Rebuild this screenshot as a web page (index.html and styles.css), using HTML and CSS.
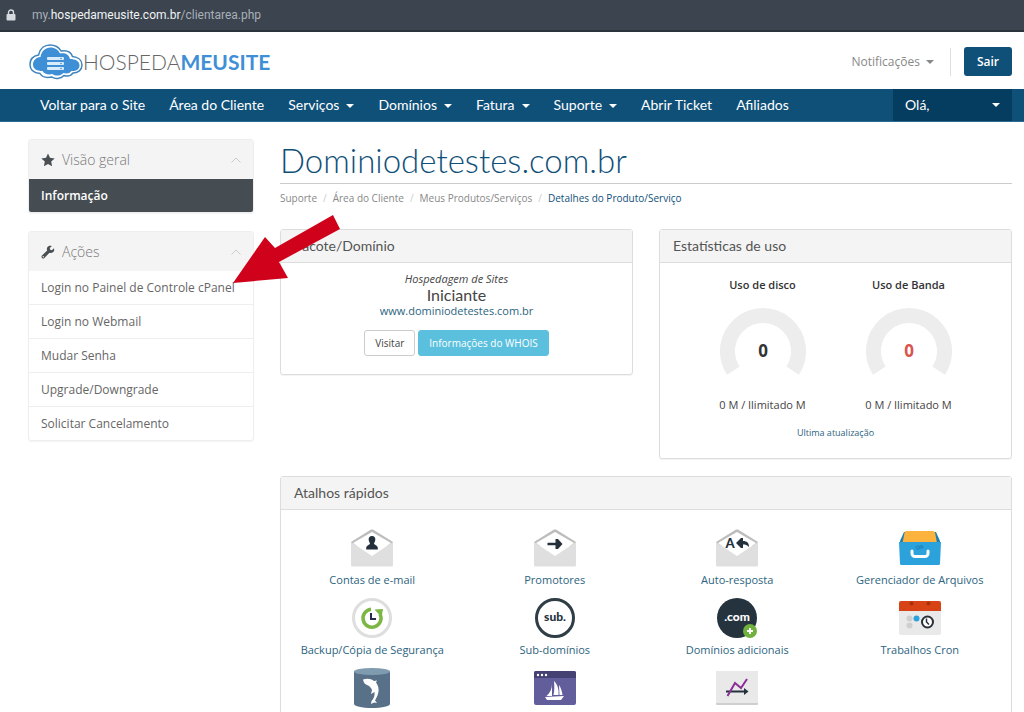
FILE: index.html
```html
<!DOCTYPE html>
<html lang="pt-BR">
<head>
    <meta charset="UTF-8">
    <meta name="viewport" content="width=device-width, initial-scale=1.0">
    <title>Dominiodetestes.com.br</title>
    <link rel="stylesheet" href="styles.css">
</head>
<body>
    <div class="address-bar">
        <svg class="lock" viewBox="0 0 10 12" aria-hidden="true">
            <path d="M2.5 6V3.5a2.5 2.5 0 0 1 5 0V6" fill="none" stroke="#d6dade" stroke-width="1.4"/>
            <rect x="0.5" y="5" width="9" height="6.5" rx="1" fill="#d6dade"/>
        </svg>
        <span class="address">my.<span class="address-host">hospedameusite.com.br</span>/clientarea.php</span>
    </div>

    <header class="header">
        <a href="#" class="logo">
            <svg class="logo-cloud" viewBox="0 0 54 36" aria-hidden="true">
                <path d="M9.500 11C11 4 16 1 21 1c5 0 9 2.500 11 6 6-1 10 1 11.500 5.500C49 13 53 16 53 21c0 5-4 8-9 8-2 3-6 3.500-9 2.500-3 3.500-9 4-12 1.500-5 1-10 0-12-3.500C5 29 1 26 1 20.500 1 15 4 12 9.500 11z" fill="#fff" stroke="#3f84bd" stroke-width="1.500"/>
                <path d="M11.500 13C12.500 7 16.500 3.500 21.500 3.500c4.500 0 8 2.500 9.500 6 5-1 9 1 10 5.500 5 0 9.500 2 9.500 6.500 0 4-4 6-8 5.500-2 2.500-5 3-8 2-3 3-8 3.500-11 1-4 1-8.500 0-10-3C8 27 4 25 4 20.500c0-4 3-7 7.500-7.500z" fill="#3f8fd6"/>
                <g fill="#d9ecfb">
                    <rect x="18" y="13" width="17" height="3" rx="1"/>
                    <rect x="18" y="18" width="17" height="3" rx="1"/>
                    <rect x="18" y="23" width="17" height="3" rx="1"/>
                </g>
                <g fill="#3f8fd6">
                    <circle cx="32" cy="14.500" r=".8"/>
                    <circle cx="32" cy="19.500" r=".8"/>
                    <circle cx="32" cy="24.500" r=".8"/>
                </g>
            </svg>
            <span class="logo-text">HOSPEDA<span class="logo-strong">MEUSITE</span></span>
        </a>
        <div class="header-actions">
            <a href="#" class="notifications">Notificações<span class="caret"></span></a>
            <button type="button" class="btn-logout">Sair</button>
        </div>
    </header>

    <nav class="navbar">
        <ul class="nav-list">
            <li><a href="#">Voltar para o Site</a></li>
            <li><a href="#">Área do Cliente</a></li>
            <li><a href="#">Serviços<span class="caret"></span></a></li>
            <li><a href="#">Domínios<span class="caret"></span></a></li>
            <li><a href="#">Fatura<span class="caret"></span></a></li>
            <li><a href="#">Suporte<span class="caret"></span></a></li>
            <li><a href="#">Abrir Ticket</a></li>
            <li><a href="#">Afiliados</a></li>
        </ul>
        <a href="#" class="nav-account">Olá,<span class="caret"></span></a>
    </nav>

    <div class="container">
        <aside class="sidebar">
            <section class="side-panel">
                <h2 class="side-heading">
                    <svg class="side-icon" viewBox="0 0 14 14" aria-hidden="true"><path d="M7 .5l2 4.300 4.700.600-3.500 3.200.900 4.700L7 11l-4.100 2.300.900-4.700L.3 5.400 5 4.800z" fill="#4a4f54"/></svg>
                    Visão geral
                    <svg class="chevron" viewBox="0 0 10 6" aria-hidden="true"><path d="M.5 5.500L5 1l4.500 4.500" fill="none" stroke="#ccc"/></svg>
                </h2>
                <a href="#" class="side-item active">Informação</a>
            </section>
            <section class="side-panel">
                <h2 class="side-heading">
                    <svg class="side-icon" viewBox="0 0 14 14" aria-hidden="true"><path d="M12.900 3.200l-2 2-1.700-.5-.4-1.700 2-2C9 .3 7 .9 6.200 2.500c-.5 1-.4 2 0 2.900L1 10.600c-.7.700-.7 1.600 0 2.300.7.700 1.700.7 2.400 0l5.100-5.200c1 .4 2 .4 3-.1 1.600-.9 2.200-2.700 1.400-4.400z" fill="#4a4f54"/><circle cx="2.300" cy="11.700" r=".7" fill="#f4f4f4"/></svg>
                    Ações
                    <svg class="chevron" viewBox="0 0 10 6" aria-hidden="true"><path d="M.5 5.500L5 1l4.500 4.500" fill="none" stroke="#ccc"/></svg>
                </h2>
                <a href="#" class="side-item">Login no Painel de Controle cPanel</a>
                <a href="#" class="side-item">Login no Webmail</a>
                <a href="#" class="side-item">Mudar Senha</a>
                <a href="#" class="side-item">Upgrade/Downgrade</a>
                <a href="#" class="side-item">Solicitar Cancelamento</a>
            </section>
        </aside>

        <main class="main">
            <h1>Dominiodetestes.com.br</h1>
            <ol class="breadcrumb">
                <li><a href="#">Suporte</a></li>
                <li><a href="#">Área do Cliente</a></li>
                <li><a href="#">Meus Produtos/Serviços</a></li>
                <li class="current">Detalhes do Produto/Serviço</li>
            </ol>

            <div class="overview">
                <section class="panel">
                    <h3 class="panel-heading">Pacote/Domínio</h3>
                    <div class="package">
                        <em>Hospedagem de Sites</em>
                        <h4>Iniciante</h4>
                        <a href="#">www.dominiodetestes.com.br</a>
                        <div class="package-buttons">
                            <button type="button" class="btn">Visitar</button>
                            <button type="button" class="btn btn-info">Informações do WHOIS</button>
                        </div>
                    </div>
                </section>

                <section class="panel">
                    <h3 class="panel-heading">Estatísticas de uso</h3>
                    <div class="usage">
                        <div class="gauge">
                            <strong>Uso de disco</strong>
                            <svg viewBox="0 0 86 72" role="img" aria-label="Uso de disco">
                                <path d="M13.400 62.700A35.500 35.500 0 1 1 72.600 62.700" fill="none" stroke="#ededed" stroke-width="15"/>
                                <text x="43" y="49" class="gauge-value">0</text>
                            </svg>
                            <span>0 M / Ilimitado M</span>
                        </div>
                        <div class="gauge gauge-over">
                            <strong>Uso de Banda</strong>
                            <svg viewBox="0 0 86 72" role="img" aria-label="Uso de Banda">
                                <path d="M13.400 62.700A35.500 35.500 0 1 1 72.600 62.700" fill="none" stroke="#ededed" stroke-width="15"/>
                                <text x="43" y="49" class="gauge-value">0</text>
                            </svg>
                            <span>0 M / Ilimitado M</span>
                        </div>
                    </div>
                    <p class="updated">Ultima atualização</p>
                </section>
            </div>

            <section class="panel">
                <h3 class="panel-heading">Atalhos rápidos</h3>
                <div class="shortcuts">
                    <a href="#" class="shortcut">
                        <svg viewBox="0 0 42 40" aria-hidden="true">
                            <path d="M0 14L20 1.500h2L42 14v4H0z" fill="#bdbdbd"/>
                            <path d="M2 15L21 4l19 11-19 14z" fill="#fff"/>
                            <path d="M0 14l21 14 21-14v23a1.500 1.500 0 0 1-1.500 1.500h-39A1.500 1.500 0 0 1 0 37z" fill="#dfdfdf"/>
                            <path d="M21 8c2.500 0 3.600 1.700 3.300 4-.2 1.600-1 2.600-1.300 3.400.2 1.700 3.600 1.400 3.800 4.600v1.500H15.200V20c.2-3.200 3.600-2.900 3.800-4.600-.3-.8-1.100-1.800-1.300-3.400-.3-2.300.8-4 3.300-4z" fill="#24313d"/>
                        </svg>
                        Contas de e-mail
                    </a>
                    <a href="#" class="shortcut">
                        <svg viewBox="0 0 42 40" aria-hidden="true">
                            <path d="M0 14L20 1.500h2L42 14v4H0z" fill="#bdbdbd"/>
                            <path d="M2 15L21 4l19 11-19 14z" fill="#fff"/>
                            <path d="M0 14l21 14 21-14v23a1.500 1.500 0 0 1-1.500 1.500h-39A1.500 1.500 0 0 1 0 37z" fill="#dfdfdf"/>
                            <path d="M13.500 14.800h8V11h2.500l4.500 5-4.500 5h-2.500v-3.700h-8z" fill="#24313d"/>
                        </svg>
                        Promotores
                    </a>
                    <a href="#" class="shortcut">
                        <svg viewBox="0 0 42 40" aria-hidden="true">
                            <path d="M0 14L20 1.500h2L42 14v4H0z" fill="#bdbdbd"/>
                            <path d="M2 15L21 4l19 11-19 14z" fill="#fff"/>
                            <path d="M0 14l21 14 21-14v23a1.500 1.500 0 0 1-1.500 1.500h-39A1.500 1.500 0 0 1 0 37z" fill="#dfdfdf"/>
                            <text x="14" y="20" class="icon-letter">A</text>
                            <path d="M20 15l5-5h2v3c4 0 6 2 6 6-2-2-3.500-2.500-6-2.500V20h-2z" fill="#24313d"/>
                        </svg>
                        Auto-resposta
                    </a>
                    <a href="#" class="shortcut">
                        <svg viewBox="0 0 42 40" aria-hidden="true">
                            <path d="M5 4h32l4 9v8H1v-8z" fill="#1b7fb5"/>
                            <path d="M7 3h27a2 2 0 0 1 2 1.500L38 15H3.500L5.500 5A2 2 0 0 1 7 3z" fill="#fbb33d"/>
                            <path d="M0 14h42l-1 21.500a1.500 1.500 0 0 1-1.500 1.500h-37A1.500 1.500 0 0 1 1 35.500z" fill="#2ba2db"/>
                            <path d="M13 23v2.500a3 3 0 0 0 3 3h10a3 3 0 0 0 3-3V23" fill="none" stroke="#fff" stroke-width="3" stroke-linecap="round"/>
                            <path d="M20 18h-1.500a1.500 1.500 0 0 0 0 3H20l1-3h2a1 1 0 0 1 0 2h-2" fill="none" stroke="#1b7fb5"/>
                        </svg>
                        Gerenciador de Arquivos
                    </a>
                    <a href="#" class="shortcut">
                        <svg viewBox="0 0 42 40" aria-hidden="true">
                            <circle cx="21" cy="20" r="18.500" fill="#fff" stroke="#dedede" stroke-width="3"/>
                            <path d="M20 11.200A9 9 0 1 0 29 16" fill="none" stroke="#7cb643" stroke-width="3.500"/>
                            <path d="M23.500 11.500l8.500-.5-1.500 8z" fill="#7cb643"/>
                            <path d="M20 15v6h5" fill="none" stroke="#2b2950" stroke-width="2"/>
                        </svg>
                        Backup/Cópia de Segurança
                    </a>
                    <a href="#" class="shortcut">
                        <svg viewBox="0 0 42 40" aria-hidden="true">
                            <circle cx="21" cy="20" r="18.500" fill="#fff" stroke="#2f3d46" stroke-width="3"/>
                            <text x="21" y="23" class="icon-word">sub.</text>
                        </svg>
                        Sub-domínios
                    </a>
                    <a href="#" class="shortcut">
                        <svg viewBox="0 0 42 40" aria-hidden="true">
                            <circle cx="21" cy="20" r="20" fill="#24333e"/>
                            <text x="21" y="23" class="icon-word icon-word-light">.com</text>
                            <circle cx="34" cy="33" r="7" fill="#6fb03e"/>
                            <path d="M34 30v6M31 33h6" stroke="#fff" stroke-width="2"/>
                        </svg>
                        Domínios adicionais
                    </a>
                    <a href="#" class="shortcut">
                        <svg viewBox="0 0 42 40" aria-hidden="true">
                            <rect y="3" width="42" height="34" rx="2" fill="#e9e9e9"/>
                            <path d="M2 3h38a2 2 0 0 1 2 2v8H0V5a2 2 0 0 1 2-2z" fill="#d84315"/>
                            <circle cx="12.500" cy="5.500" r="2" fill="#a8300c"/>
                            <circle cx="29.500" cy="5.500" r="2" fill="#a8300c"/>
                            <circle cx="10.500" cy="20.500" r="3" fill="#cfcfcf"/>
                            <circle cx="17.500" cy="20.500" r="3" fill="#2ba2db"/>
                            <circle cx="10.500" cy="27.500" r="3" fill="#cfcfcf"/>
                            <circle cx="28.500" cy="24" r="5.500" fill="#fff" stroke="#2b3138" stroke-width="2"/>
                            <path d="M27.500 20.500v3.500l2.500 2.500" fill="none" stroke="#2b3138" stroke-width="1.500"/>
                        </svg>
                        Trabalhos Cron
                    </a>
                    <a href="#" class="shortcut" aria-label="MySQL">
                        <svg viewBox="0 0 42 40" aria-hidden="true">
                            <path d="M3 3v33c0 2 8 4 18 4s18-2 18-4V3z" fill="#587188"/>
                            <ellipse cx="21" cy="3.500" rx="18" ry="3.500" fill="#7f9bb0"/>
                            <path d="M12 11.500c4-1.500 8-1 11 1.500l3-.5-1 2c3 4 3.500 9 1 14l-2 4 2 2.500-3-.5-3 1.500.5-3c2.500-2.500 3.500-6 3-9l-3.500 2 1-4c-1-2.500-2.500-4-5-5-2-.5-3.500-2.500-4-5.500z" fill="#fff"/>
                        </svg>
                    </a>
                    <a href="#" class="shortcut" aria-label="Site Publisher">
                        <svg viewBox="0 0 42 40" aria-hidden="true">
                            <rect y="3" width="42" height="34" rx="2" fill="#625e9c"/>
                            <path d="M2 3h38a2 2 0 0 1 2 2v5H0V5a2 2 0 0 1 2-2z" fill="#454173"/>
                            <g fill="#fff">
                                <circle cx="4" cy="7" r="1.200"/>
                                <circle cx="8" cy="7" r="1.200"/>
                                <circle cx="12" cy="7" r="1.200"/>
                                <path d="M18 16c0 5-2 9-5.500 12H18zM20 13c4 4 5 9 4.500 14H19.500c1-4 1-9 .5-14zM25 17c2 3 3 6 3.500 10H25.500zM11 29l19-1-3 4H13z"/>
                            </g>
                        </svg>
                    </a>
                    <a href="#" class="shortcut" aria-label="Awstats">
                        <svg viewBox="0 0 42 40" aria-hidden="true">
                            <rect y="3" width="42" height="34" rx="1" fill="#cfcfcf"/>
                            <rect y="3" width="42" height="32" rx="1" fill="#e9e9e9"/>
                            <path d="M10 23.500h19" stroke="#24313d" stroke-width="2"/>
                            <path d="M28 20l4.500 3.500-4.500 3.500z" fill="#24313d"/>
                            <path d="M11.500 28l7.500-13 6 5 6-9" fill="none" stroke="#8b2f97" stroke-width="2"/>
                        </svg>
                    </a>
                </div>
            </section>
        </main>
    </div>

    <svg class="pointer-arrow" viewBox="0 0 108 70" aria-hidden="true">
        <path d="M0 69L32 23l10 11L100 1l7 14-61 33 9 16z" fill="#d0021b"/>
    </svg>
</body>
</html>
```
FILE: styles.css
```css
:root {
    --primary-color: #0f5079;
    --primary-dark: #043d5f;
    --link-color: #2c6480;
    --text-color: #444;
    --muted-color: #888;
    --border-color: #ddd;
    --heading-background: #f4f4f4;
}
* {
    box-sizing: border-box;
}
body {
    position: relative;
    margin: 0;
    min-height: 100vh;
    background-color: #fff;
    color: var(--text-color);
    font-family: "Open Sans", sans-serif;
    font-size: 12px;
    line-height: 16px;
}
h1, h2, h3, h4, ol, ul, p {
    margin: 0;
    padding: 0;
    font-weight: normal;
}
ol, ul {
    list-style: none;
}
a {
    color: var(--link-color);
    text-decoration: none;
}
button {
    font-family: inherit;
    cursor: pointer;
}
.address-bar {
    display: flex;
    align-items: center;
    gap: 16px;
    height: 32px;
    padding: 0 6px;
    background-color: #3b444f;
    border-bottom: 2px solid #2a323b;
    color: #a9b0b7;
    font-family: Roboto, sans-serif;
}
.lock {
    width: 10px;
    height: 12px;
}
.address-host {
    color: #f1f3f4;
}
.header {
    display: flex;
    align-items: center;
    justify-content: space-between;
    height: 57px;
    padding: 2px 12px 0 29px;
}
.logo {
    display: flex;
    align-items: center;
}
.logo-cloud {
    width: 54px;
    height: 36px;
}
.logo-text {
    color: #666;
    font-family: Lato, sans-serif;
    font-size: 21px;
    font-weight: 300;
    line-height: 32px;
}
.logo-strong {
    color: #3f8fd6;
    font-weight: 700;
}
.header-actions {
    display: flex;
    align-items: center;
}
.notifications {
    padding: 6px 16px 6px 0;
    border-right: 1px solid var(--border-color);
    color: var(--muted-color);
    font-size: 12px;
}
.caret {
    display: inline-block;
    margin-left: 6px;
    border: 4px solid transparent;
    border-top-color: currentColor;
    border-bottom: 0;
    vertical-align: middle;
}
.btn-logout {
    margin-left: 13px;
    padding: 6px 13px;
    background-color: var(--primary-color);
    border: 0;
    border-radius: 3px;
    color: #fff;
    font-size: 12px;
    font-weight: 600;
    line-height: 17px;
}
.navbar {
    display: flex;
    justify-content: space-between;
    height: 33px;
    padding: 0 12px 0 28px;
    background-color: var(--primary-color);
    border-bottom: 1px solid #2f6a90;
    font-family: Lato, sans-serif;
    font-size: 14px;
    line-height: 32px;
}
.nav-list {
    display: flex;
}
.navbar a {
    display: block;
    padding: 0 12px;
    color: #fff;
}
.navbar .caret {
    margin-left: 7px;
}
.navbar .nav-account {
    display: flex;
    align-items: center;
    justify-content: space-between;
    width: 119px;
    background-color: var(--primary-dark);
}
.container {
    display: grid;
    grid-template-columns: 226px 1fr;
    gap: 26px;
    align-items: start;
    padding: 17px 12px 0 28px;
}
.sidebar {
    display: grid;
    gap: 18px;
}
.side-panel {
    border: 1px solid #eee;
    border-radius: 3px;
    box-shadow: 0 1px 1px rgba(0, 0, 0, 0.05);
    overflow: hidden;
}
.side-heading {
    display: flex;
    align-items: center;
    gap: 7px;
    height: 39px;
    padding: 0 12px;
    background-color: var(--heading-background);
    color: #777;
    font-size: 14px;
    font-weight: 300;
}
.side-icon {
    width: 14px;
    height: 14px;
}
.chevron {
    width: 10px;
    height: 6px;
    margin-left: auto;
}
.side-item {
    display: block;
    padding: 8px 12px;
    border-top: 1px solid #eee;
    color: #666;
    line-height: 17px;
}
.side-heading + .side-item {
    border-top: 0;
}
.side-item.active {
    background-color: #464d52;
    color: #fff;
    font-weight: 600;
}
h1 {
    padding-bottom: 2px;
    border-bottom: 1px solid #ccc;
    color: var(--primary-color);
    font-family: Lato, sans-serif;
    font-size: 33px;
    font-weight: 300;
    line-height: 42px;
}
.breadcrumb {
    display: flex;
    padding: 6px 0 23px;
    font-size: 10px;
}
.breadcrumb li + li::before {
    padding: 0 6px;
    color: #ccc;
    content: "/";
}
.breadcrumb a {
    color: var(--muted-color);
}
.current {
    color: var(--primary-color);
}
.overview {
    display: grid;
    grid-template-columns: repeat(2, 1fr);
    gap: 26px;
    align-items: start;
    margin-bottom: 17px;
}
.panel {
    border: 1px solid var(--border-color);
    border-radius: 3px;
    box-shadow: 0 1px 1px rgba(0, 0, 0, 0.05);
}
.panel-heading {
    padding: 0 13px;
    background-color: var(--heading-background);
    border-bottom: 1px solid var(--border-color);
    color: #555;
    font-family: Lato, sans-serif;
    font-size: 14px;
    line-height: 32px;
}
.package {
    padding: 8px 13px 18px;
    font-size: 11px;
    text-align: center;
}
.package h4 {
    font-family: Lato, sans-serif;
    font-size: 16px;
}
.package-buttons {
    display: flex;
    justify-content: center;
    gap: 3px;
    margin-top: 11px;
}
.btn {
    padding: 4px 10px;
    background-color: #fff;
    border: 1px solid #ccc;
    border-radius: 3px;
    color: var(--text-color);
    font-size: 10px;
    line-height: 16px;
}
.btn-info {
    background-color: #5bc0de;
    border-color: #5bc0de;
    color: #fff;
}
.usage {
    display: flex;
    justify-content: center;
    gap: 36px;
    padding-top: 14px;
}
.gauge {
    display: flex;
    flex-direction: column;
    align-items: center;
    min-width: 110px;
    font-size: 11px;
}
.gauge strong {
    color: #333;
    font-weight: 600;
}
.gauge svg {
    width: 86px;
    height: 72px;
    margin: 15px 0 17px;
}
.gauge-value {
    fill: #333;
    font-size: 17px;
    font-weight: 700;
    text-anchor: middle;
}
.gauge-over .gauge-value {
    fill: #d9534f;
}
.updated {
    padding: 12px 0 17px;
    color: var(--link-color);
    font-size: 9px;
    text-align: center;
}
.shortcuts {
    display: grid;
    grid-template-columns: repeat(4, 1fr);
    gap: 10px 0;
    padding: 18px 0;
}
.shortcut {
    display: flex;
    flex-direction: column;
    align-items: center;
    gap: 4px;
    font-size: 11px;
}
.shortcut svg {
    width: 42px;
    height: 40px;
}
.icon-letter,
.icon-word {
    fill: #24313d;
    font-family: Lato, sans-serif;
    font-weight: 900;
    text-anchor: middle;
}
.icon-letter {
    font-size: 13px;
}
.icon-word {
    font-size: 12px;
}
.icon-word-light {
    fill: #fff;
}
/* Red arrow pointing at the cPanel login link */
.pointer-arrow {
    position: absolute;
    top: 214px;
    left: 233px;
    width: 108px;
    height: 70px;
    pointer-events: none;
}
```
